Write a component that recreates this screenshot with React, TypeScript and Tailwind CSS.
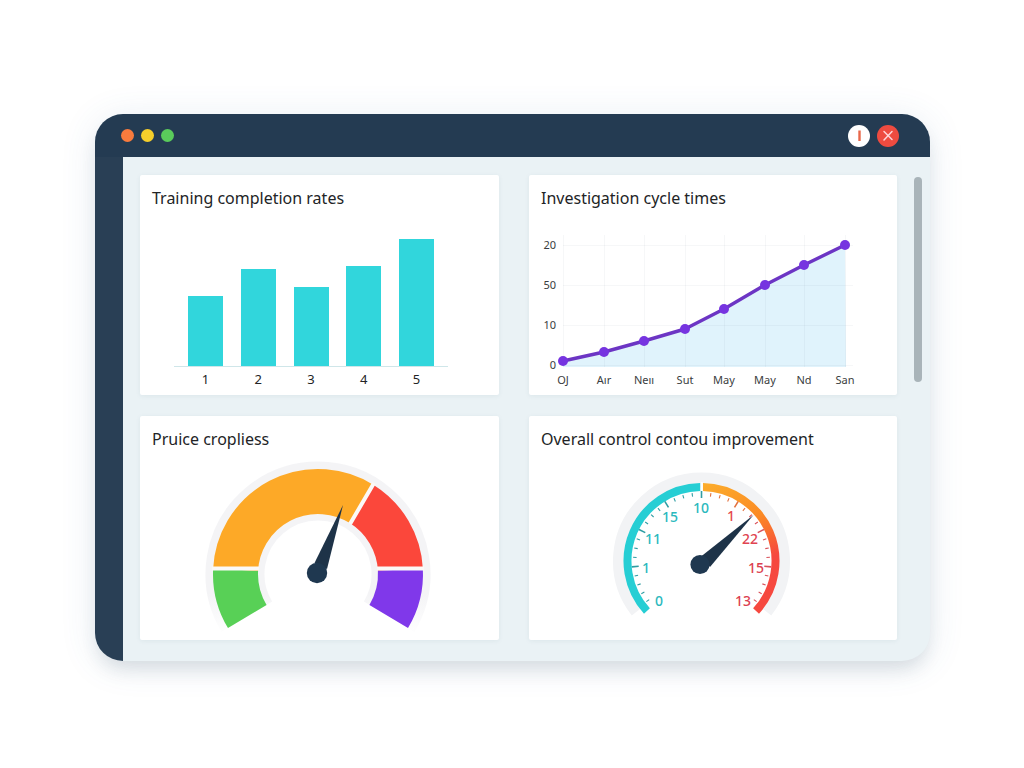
import { ReactNode } from "react";

interface PanelProps {
  title: string;
  children: ReactNode;
}

const bars = [
  { label: "1", height: 70 },
  { label: "2", height: 97 },
  { label: "3", height: 79 },
  { label: "4", height: 100 },
  { label: "5", height: 127 },
];

const cyclePoints = [
  { label: "OJ", x: 34, y: 151 },
  { label: "Aır", x: 75, y: 142 },
  { label: "Neıı", x: 115, y: 131 },
  { label: "Sut", x: 156, y: 119 },
  { label: "May", x: 195, y: 99 },
  { label: "May", x: 236, y: 75 },
  { label: "Nd", x: 275, y: 55 },
  { label: "San", x: 316, y: 35 },
];

const cycleScale = [
  { label: "20", y: 35 },
  { label: "50", y: 75 },
  { label: "10", y: 115 },
  { label: "0", y: 155 },
];

const dialLabels = [
  { label: "0", x: 130, y: 155, fill: "#2bb9bd" },
  { label: "1", x: 117, y: 122, fill: "#2bb9bd" },
  { label: "11", x: 124, y: 93, fill: "#2bb9bd" },
  { label: "15", x: 141, y: 71, fill: "#2bb9bd" },
  { label: "10", x: 172, y: 62, fill: "#2bb9bd" },
  { label: "1", x: 202, y: 70, fill: "#e5484d" },
  { label: "22", x: 221, y: 93, fill: "#e04450" },
  { label: "15", x: 227, y: 122, fill: "#dc3f50" },
  { label: "13", x: 214, y: 155, fill: "#dc3f50" },
];

// Angles are in degrees, counted anticlockwise from three o'clock
function polar(r: number, angle: number) {
  const rad = (angle * Math.PI) / 180;
  return { x: r * Math.cos(rad), y: -r * Math.sin(rad) };
}

function arc(r: number, from: number, to: number) {
  const a = polar(r, from);
  const b = polar(r, to);
  const large = from - to > 180 ? 1 : 0;
  return `M${a.x} ${a.y}A${r} ${r} 0 ${large} 1 ${b.x} ${b.y}`;
}

function Panel({ title, children }: PanelProps) {
  return (
    <section className="flex flex-col rounded-xs bg-white pt-[11px] shadow-[0_1px_5px_rgba(40,80,100,0.07)]">
      <h2 className="px-3 text-base leading-6 text-[#222426]">{title}</h2>
      {children}
    </section>
  );
}

function BarChart() {
  return (
    <div className="ml-[34px] w-[274px] pb-1">
      <div className="flex h-[157px] items-end justify-between border-b border-[#cfe6e9] px-[14px]">
        {bars.map((bar) => (
          <div
            key={bar.label}
            className="w-[35px] bg-[#31d6dc]"
            style={{ height: bar.height }}
          />
        ))}
      </div>
      <div className="flex justify-between px-[14px]">
        {bars.map((bar) => (
          <span
            key={bar.label}
            className="w-[35px] text-center text-[13px] leading-6 text-[#222426]"
          >
            {bar.label}
          </span>
        ))}
      </div>
    </div>
  );
}

function LineChart() {
  const line = cyclePoints.map((p) => `${p.x},${p.y}`).join(" ");
  return (
    <svg viewBox="0 0 368 185" className="w-full" role="img" aria-label="Cycle times">
      <polygon points={`${line} 317,157 34,157`} fill="#e0f3fc" />
      <g stroke="#5f7f8f" strokeOpacity="0.06">
        {cyclePoints.map((p) => (
          <line key={p.x} x1={p.x + 0.5} x2={p.x + 0.5} y1="25" y2="157" />
        ))}
        {cycleScale.map((s) => (
          <line key={s.y} x1="34" x2="324" y1={s.y + 0.5} y2={s.y + 0.5} />
        ))}
      </g>
      <polyline
        points={line}
        fill="none"
        stroke="#6c35c4"
        strokeWidth="3.4"
        strokeLinejoin="round"
      />
      {cyclePoints.map((p) => (
        <circle key={p.x} cx={p.x} cy={p.y} r="5" fill="#7634e0" />
      ))}
      <g fontSize="11" fill="#3a3d40">
        {cycleScale.map((s) => (
          <text key={s.y} x="27" y={s.y + 4} textAnchor="end">
            {s.label}
          </text>
        ))}
        {cyclePoints.map((p) => (
          <text key={p.x} x={p.x} y="174" textAnchor="middle">
            {p.label}
          </text>
        ))}
      </g>
    </svg>
  );
}

function SegmentGauge() {
  return (
    <svg viewBox="0 0 359 189" className="w-full" role="img" aria-label="Gauge">
      <defs>
        <linearGradient id="halo" gradientUnits="userSpaceOnUse" x1="0" y1="20" x2="0" y2="62">
          <stop offset="0" stopColor="#f4f4f6" />
          <stop offset="1" stopColor="#ffffff" />
        </linearGradient>
      </defs>
      <g transform="translate(178 123)" fill="none" strokeWidth="45">
        <path d={arc(83, 211, -31)} stroke="url(#halo)" strokeWidth="59" />
        <path d={arc(82.5, 211, 177)} stroke="#58d056" />
        <path d={arc(82.5, 177, 58)} stroke="#fda927" />
        <path d={arc(82.5, 58, 3)} stroke="#fb473b" />
        <path d={arc(82.5, 3, -31)} stroke="#8038ea" />
        <path
          d="M-106 -5.5H-59M59 -5.5H106M32 -50L56 -91"
          stroke="#fbf9f7"
          strokeWidth="4"
        />
      </g>
      <path d="M203 54L174.500 112L187 118Z" fill="#1e3348" />
      <circle cx="177" cy="122" r="10.200" fill="#1f3850" />
    </svg>
  );
}

function DialGauge() {
  const ticks = Array.from({ length: 33 }, (_, i) => i - 16);
  return (
    <svg viewBox="0 0 368 189" className="w-full" role="img" aria-label="Dial">
      <defs>
        <linearGradient id="heat" gradientUnits="userSpaceOnUse" x1="0" y1="-78" x2="40" y2="10">
          <stop offset="0" stopColor="#fcae2c" />
          <stop offset="0.55" stopColor="#fb8a24" />
          <stop offset="1" stopColor="#f6483f" />
        </linearGradient>
      </defs>
      <g transform="translate(172.500 110)" fill="none">
        <path d={arc(81, 218, -38)} stroke="#f2f3f5" strokeWidth="15" />
        <path d={arc(74, 222.5, 91)} stroke="#26ced4" strokeWidth="8" />
        <path d={arc(74, 89, -42.5)} stroke="url(#heat)" strokeWidth="8" />
        <path d="M0.500 -79V-66" stroke="#ffffff" strokeWidth="1.800" />
        {ticks.map((k) => {
          const angle = 90 - k * 7.9;
          const major = k % 4 === 0 && Math.abs(k) < 16;
          const a = polar(major ? 63 : 65, angle);
          const b = polar(major ? 70 : 68.5, angle);
          return (
            <line
              key={k}
              x1={a.x}
              y1={a.y}
              x2={b.x}
              y2={b.y}
              stroke={k <= 0 ? "#2f9da3" : k < 6 ? "#e2713f" : "#d9505a"}
              strokeWidth={major ? 1.6 : 1.1}
            />
          );
        })}
      </g>
      <g fontSize="14" fontWeight="500" textAnchor="middle">
        {dialLabels.map((d) => (
          <text key={`${d.x}-${d.y}`} x={d.x} y={d.y} fill={d.fill}>
            {d.label}
          </text>
        ))}
      </g>
      <path d="M224.500 64L172 105.500L181 116Z" fill="#1e3348" />
      <circle cx="171" cy="113.500" r="9.600" fill="#1f3850" />
    </svg>
  );
}

function TitleBar() {
  return (
    <header className="flex h-[43px] items-center justify-between bg-[#243b52] pr-[31px] pl-[26px]">
      <div className="flex gap-[7px]">
        <button aria-label="Quit" className="size-[13px] rounded-full bg-[#f97b3d]" />
        <button aria-label="Hide" className="size-[13px] rounded-full bg-[#f6cf2b]" />
        <button aria-label="Zoom" className="size-[13px] rounded-full bg-[#5acb5b]" />
      </div>
      <div className="flex gap-[7px]">
        <button
          aria-label="Alerts"
          className="flex size-[22px] items-center justify-center rounded-full bg-white"
        >
          <svg viewBox="0 0 22 22" className="size-full" aria-hidden="true">
            <path d="M11.500 5.500V16" stroke="#e8674a" strokeWidth="2.400" />
          </svg>
        </button>
        <button
          aria-label="Close"
          className="flex size-[22px] items-center justify-center rounded-full bg-[#ee4b40]"
        >
          <svg viewBox="0 0 22 22" className="size-full" aria-hidden="true">
            <path
              d="M7 6.500L15 14.500M15 6.500L7 15"
              stroke="#ffd5d8"
              strokeWidth="1.500"
              strokeLinecap="round"
            />
          </svg>
        </button>
      </div>
    </header>
  );
}

function App() {
  return (
    <div className="min-h-screen bg-white pt-[114px] pr-[94px] pb-10 pl-[95px] font-['Noto_Sans',sans-serif]">
      <div className="overflow-hidden rounded-[28px] bg-[#eaf2f5] shadow-[0_12px_18px_-4px_rgba(40,60,80,0.13),0_4px_36px_rgba(60,110,160,0.12)]">
        <TitleBar />
        <div className="flex">
          <div className="w-7 shrink-0 bg-[#293f55]" />
          <main className="grid grow grid-cols-[359fr_368fr] gap-x-[30px] gap-y-[21px] pt-[18px] pb-[21px] pl-[17px]">
            <Panel title="Training completion rates">
              <BarChart />
            </Panel>
            <Panel title="Investigation cycle times">
              <LineChart />
            </Panel>
            <Panel title="Pruice cropliess">
              <SegmentGauge />
            </Panel>
            <Panel title="Overall control contou improvement">
              <DialGauge />
            </Panel>
          </main>
          <div className="mt-5 mr-2 ml-[17px] h-[205px] w-2 shrink-0 rounded-full bg-[#a9b4b9]" />
        </div>
      </div>
    </div>
  );
}

export default App;
